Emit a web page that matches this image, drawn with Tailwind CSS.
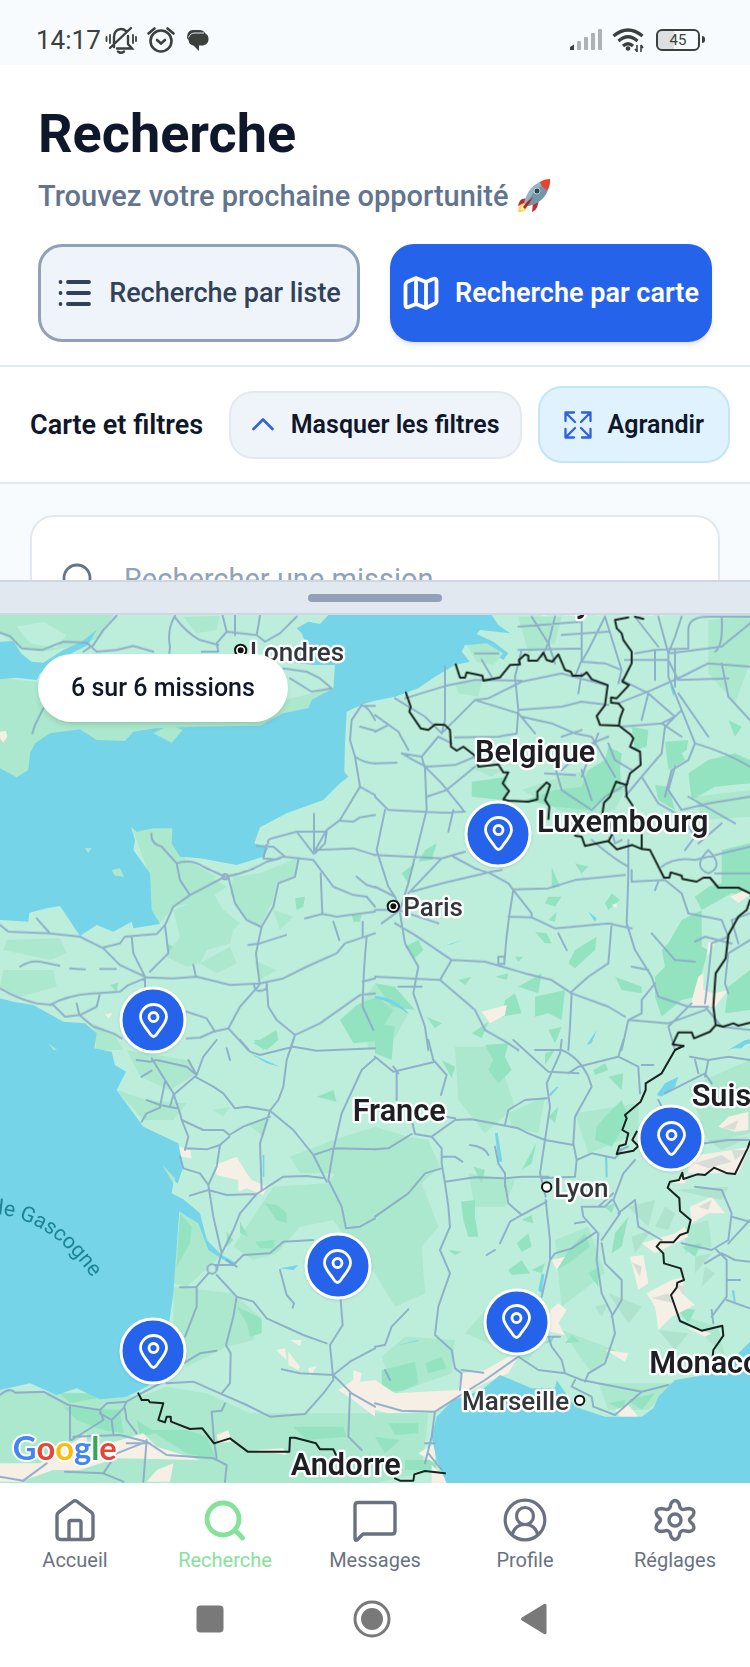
<!DOCTYPE html>
<html lang="fr">
<head>
<meta charset="utf-8">
<meta name="viewport" content="width=device-width, initial-scale=1">
<title>Recherche</title>
<script src="https://cdn.jsdelivr.net/npm/@tailwindcss/browser@4"></script>
</head>
<body class="flex min-h-screen flex-col bg-white font-['Roboto',sans-serif] text-slate-900">

<!-- Status bar -->
<div class="flex h-[65px] items-center justify-between bg-[#f7fbfe] pt-[14px] pr-[45px] pl-9 text-[#3b403e]">
  <div class="flex items-center">
    <span class="text-[26px] leading-8">14:17</span>
    <svg class="ml-1 h-8 w-8" viewBox="0 0 32 32" fill="none" stroke="currentColor" stroke-width="2.4" stroke-linecap="round">
      <path d="M9 23V13C9 8 12 5 16 5C18 5 19.500 5.600 21 7M23 12V20L27 24.500H12M5 24L26 4"/>
      <path d="M1.500 13V17M5 11V19M28 11V19M31 13V17" stroke-width="1.800"/>
      <path d="M13 27.500Q16 30 19 27.500" />
    </svg>
    <svg class="ml-2 h-8 w-8" viewBox="0 0 32 32" fill="none" stroke="currentColor" stroke-width="2.600" stroke-linecap="round">
      <circle cx="16" cy="17" r="10.500"/><path d="M3.500 9.500L9.500 4.500M22.500 4.500L28.500 9.500M12 16L16 19.500L20 16"/>
    </svg>
    <svg class="ml-1 h-8 w-8" viewBox="0 0 32 32" fill="currentColor">
      <path d="M12 6H18C21 6 23 7 24.500 9.500C27 11 27.500 13 27.500 15C27.500 19 25 21.500 20.500 21.500H18V27L12.500 21.500C9 21 8 19 7.500 16L6 14C6 9 8 6 12 6Z"/>
      <path d="M7.500 13.500Q9 9 14 9H23" stroke="#f7fbfe" stroke-width=".9" fill="none"/>
    </svg>
  </div>
  <div class="flex items-center gap-2">
    <svg class="h-6 w-9" viewBox="0 0 36 24" fill="#adb2b5">
      <path fill="#3b403e" d="M2 22V19L6 16.500V22Z"/><rect x="9" y="13" width="4" height="9" rx="1"/><rect x="16" y="9" width="4" height="13" rx="1"/><rect x="23" y="5" width="4" height="17" rx="1"/><rect x="30" y="1" width="4" height="21" rx="1"/>
    </svg>
    <svg class="h-6 w-8" viewBox="0 0 32 24" fill="none" stroke="currentColor" stroke-width="3.200">
      <path d="M1.500 8Q16 -4 30.500 8M6.500 13Q16 4.500 25.500 13M11 18Q16 13.500 21 18"/><circle cx="16" cy="20.500" r="1.600" fill="currentColor" stroke-width="1.500"/><path d="M25 17V24M29 17V24M23 21L25 23.500M29 17L31 20" stroke-width="1.600"/>
    </svg>
    <div class="ml-1 flex items-center gap-[2px]">
      <div class="flex h-[22px] w-[44px] items-center justify-center rounded-md border-2 border-current bg-linear-to-r from-[#dddfe0] from-40% to-transparent to-40% text-[15px] leading-4">45</div>
      <div class="h-[7px] w-[3px] rounded-r bg-current"></div>
    </div>
  </div>
</div>

<!-- Header -->
<header class="border-b-2 border-slate-200 px-[38px] pt-[37px] pb-[23px]">
  <h1 class="text-[54px] leading-16 font-bold">Recherche</h1>
  <p class="mt-3 flex items-center gap-2 text-[29px] leading-9 font-medium text-slate-500">Trouvez votre prochaine opportunité
    <svg class="h-9 w-9" viewBox="0 0 36 36" role="img" aria-label="Fusée">
      <path d="M12 20L6 21Q3 23 2 28L10 25Z" fill="#c22a34"/><path d="M17 25L16 34Q21 32 22 26L23 22Z" fill="#c22a34"/>
      <path d="M8 25Q2 27 2 34Q9 35 12 28Z" fill="#fbd95b"/><path d="M9 26Q4 29 5 32Q9 31 11 28Z" fill="#fff3b8"/>
      <path d="M10 27L8 25C11 13 17 6 27 3L33 9C30 19 23 26 12 28Z" fill="#93b4c1"/><path d="M10 27C16 15 22 9 30 6L33 9C30 19 23 26 12 28Z" fill="#7496a5"/>
      <path d="M24 4Q28 1 34 1Q35 7 31 12Q26 10 24 4Z" fill="#e8432e"/><path d="M7 29Q11 23 17 19Q14 25 9 31Z" fill="#b5252e"/>
      <circle cx="21" cy="13" r="3" fill="#2d4854" stroke="#b9cfd7"/>
    </svg>
  </p>
  <div class="mt-[30px] grid grid-cols-2 gap-[30px]">
    <button type="button" class="flex h-[98px] items-center justify-center rounded-3xl border-[3px] border-slate-400 bg-[#eff3fa] text-[27px] font-medium whitespace-nowrap text-slate-700">
      <svg class="mr-4 h-9 w-9 shrink-0" viewBox="0 0 36 36" fill="none" stroke="currentColor" stroke-width="3.800" stroke-linecap="round"><path d="M11 7H32M11 18H32M11 29H32M3.500 7V7.010M3.500 18V18.010M3.500 29V29.010"/></svg>
      Recherche par liste
    </button>
    <button type="button" class="flex h-[98px] items-center justify-center rounded-3xl bg-[#2563eb] text-[27px] font-semibold whitespace-nowrap text-white shadow-md">
      <svg class="mr-4 h-9 w-9 shrink-0" viewBox="0 0 36 36" fill="none" stroke="currentColor" stroke-width="3.800" stroke-linejoin="round"><path d="M13 3L4 7Q2.500 8 2.500 10V30Q2.500 33 5.500 32L13 29L23 33L31 29Q33.500 28 33.500 26V6Q33.500 3 30 4L23 7ZM13 3V29M23 7V33"/></svg>
      Recherche par carte
    </button>
  </div>
</header>

<!-- Map toolbar -->
<section class="flex items-center justify-between border-b-2 border-slate-200 py-[19px] pr-5 pl-[30px]">
  <h2 class="text-[27px] leading-8 font-semibold">Carte et filtres</h2>
  <div class="flex items-center gap-4">
    <button type="button" class="flex h-[68px] items-center rounded-3xl border-2 border-[#e4e8f1] bg-[#eff3fa] px-5 text-[25px] font-semibold whitespace-nowrap">
      <svg class="mr-4 h-6 w-6" viewBox="0 0 24 24" fill="none" stroke="#2f62dd" stroke-width="2.600" stroke-linecap="round" stroke-linejoin="round"><path d="M2.500 16L12 6.500L21.500 16"/></svg>
      Masquer les filtres
    </button>
    <button type="button" class="flex h-[77px] items-center rounded-3xl border-2 border-[#c3e6f5] bg-[#e0f2fe] px-6 text-[25px] font-semibold whitespace-nowrap">
      <svg class="mr-4 h-7 w-7" viewBox="0 0 28 28" fill="none" stroke="#2f62dd" stroke-width="2.300" stroke-linecap="round" stroke-linejoin="round"><path d="M1.500 10V1.500H10M1.500 1.500L11 11M18 1.500H26.500V10M26.500 1.500L17 11M1.500 18V26.500H10M1.500 26.500L11 17M18 26.500H26.500V18M26.500 26.500L17 17"/></svg>
      Agrandir
    </button>
  </div>
</section>

<section class="h-24 shrink-0 overflow-hidden bg-[#f7fbfe] px-[30px] pt-[31px]">
  <div class="rounded-3xl border-2 border-slate-200 bg-white px-[30px] py-7">
    <label class="flex h-[70px] items-center">
      <svg class="mr-7 h-[34px] w-[34px] shrink-0" viewBox="0 0 34 34" fill="none" stroke="#64748b" stroke-width="2.800" stroke-linecap="round"><circle cx="15" cy="15" r="13"/><path d="M25 25L32 32"/></svg>
      <input type="search" aria-label="Rechercher une mission" placeholder="Rechercher une mission..." class="w-full text-[29px] outline-none placeholder:text-slate-400">
    </label>
  </div>
</section>
<button type="button" aria-label="Redimensionner la carte" class="flex h-[35px] shrink-0 items-center justify-center border-y-2 border-[#cfd7e3] bg-slate-200">
  <span class="h-2 w-[134px] rounded-full bg-[#94a0b8]"></span>
</button>

<!-- Map -->
<main class="relative min-h-[868px] flex-1 overflow-hidden bg-[#bdeedb]">
  <svg class="absolute inset-0 h-full w-full" viewBox="0 0 2250 2604" preserveAspectRatio="xMidYMid slice">
    <rect width="2250" height="2604" fill="#bdeedb"/>
    <!-- light woodland -->
    <g fill="#abe8cd">
      <path transform="translate(0 -15)" d="M0 15H340L300 80 250 105 130 125 60 115 0 68ZM0 205L110 215 300 290 600 330 1000 235 860 340 400 400 290 400 90 500 0 500ZM550 20L660 18 650 60 590 70ZM395 650L520 650 560 760 680 830 620 870 520 890 480 940 440 930 450 800ZM560 750L650 800 570 850ZM700 800L780 790 900 740 890 790 830 820 820 870 780 950 730 920 690 850ZM520 900L640 850 670 900 720 940 700 960 690 1000 620 1020 600 1060 560 1070 500 1040 540 980ZM600 1060L690 1010 710 1060 650 1090ZM20 990L180 985 200 1030 150 1050 10 1020ZM10 1080L160 1080 170 1130 60 1160 0 1130ZM820 900L880 920 840 960ZM760 1050L830 1080 780 1110ZM280 1240L340 1270 370 1320 290 1320Z"/>
      <path transform="translate(1125 -15)" d="M430 20L560 20 540 100 460 130ZM240 220L320 215 310 260 250 250ZM1000 30L1125 20V160L1080 280 1000 190ZM960 560L1125 540V620L980 630ZM-40 1180L0 1120 60 1140 100 1210 40 1320 -20 1320ZM280 470L380 480 350 500ZM440 540L560 500 640 480 750 540 720 600 620 620 550 600Z"/>
      <path fill="#bdeedb" d="M50 35L130 20 200 60 170 100 90 85Z"/>
      <path transform="translate(0 1275)" d="M380 30L560 60 590 100 510 150 420 110ZM350 150L440 180 560 190 520 240 430 240ZM540 520L600 540 640 640 660 650 560 740 520 730ZM520 740L700 760 780 830 760 900 680 920 560 980 520 900ZM820 440L980 430 1125 280V700L1070 640 1000 540 900 560 830 640 760 660 700 620ZM870 350L1000 300 1125 260V460L1050 480 1000 400 900 400ZM0 1050L250 1060 420 1070 500 1040 620 1060 750 1120 1125 1120V1330H0ZM640 210L690 200 670 230ZM740 250L810 230 790 290Z"/>
      <path transform="translate(1125 1275)" d="M0 260L100 290 160 300 195 380 140 430 190 560 140 620 150 760 60 800 0 700ZM240 20L360 20 420 200 330 280 250 180ZM280 400L420 420 390 500 300 500ZM400 220L510 170 490 280 410 260ZM540 600L640 560 690 700 560 800ZM600 220L790 190 790 280 640 340ZM20 950L90 890 240 900 230 1000 60 1060ZM270 880L340 800 520 880 460 960ZM560 870L720 930 650 1000ZM670 1030L900 1030 820 1110 700 1110ZM940 140L1125 60V280L1000 310ZM0 1120L160 1120 140 1300 0 1330ZM1050 950L930 830 1030 860ZM930 560L1000 540 1010 620 930 640Z"/>
    </g>
    <!-- dense woodland -->
    <g fill="#94e3c0">
      <path transform="translate(0 -15)" d="M885 865L915 860 910 890 890 900ZM1055 915L1085 915 1080 935 1060 935ZM330 1125L355 1118 350 1145ZM760 1300L830 1260 835 1290 800 1320ZM1020 1230L1070 1185 1130 1160 1180 1200 1150 1250 1165 1290 1060 1300ZM500 1000L520 1010 505 1030Z"/>
      <path transform="translate(1125 -15)" d="M290 515L400 500 390 530 400 550 380 570 290 560ZM700 410L740 430 735 480 740 540 690 560 640 600 540 590 450 570 540 540 620 530 640 480 690 450ZM870 395L940 390 935 420 920 430 930 450 880 480ZM940 490L1000 450 1080 430 1125 450V520L1020 530 950 570ZM770 350L820 360 815 410 780 420ZM840 525L880 530 900 600 850 570ZM1040 720L1125 700V860L1070 850 980 900 960 860 1000 830 1040 820ZM880 1000L920 930 980 900 980 960 980 1010 1000 1020 980 1090 960 1160 920 1170 860 1220 840 1160 840 1100 870 1070 860 1020ZM710 850L735 870 700 900 690 880ZM580 1060L600 1020 665 980 660 1020 600 1075ZM520 860L560 860 540 890 510 880ZM530 770L555 830 530 835ZM600 760L640 770 620 790 650 840ZM150 720L185 700 170 750 130 755ZM80 790L120 760 100 820ZM90 1010L130 990 145 1020 120 1045ZM480 965L515 970 530 1000 510 1000ZM0 1120L60 1130 120 1200 50 1190ZM250 1110L290 1100 270 1125ZM360 1100L400 1090 395 1110ZM390 1170L420 1150 440 1210 380 1220ZM430 1130L500 1090 490 1150ZM480 1160L570 1140 560 1230 520 1210 480 1220ZM290 1270L340 1235 320 1285ZM420 1040L445 1040 430 1055ZM720 1100L800 1130 800 1150 740 1140ZM1060 1130L1125 1080V1200L1050 1210ZM0 1240L60 1250 50 1320H0ZM520 1260L560 1250 540 1300ZM155 1220L200 1240 180 1255ZM1060 330L1100 350 1080 380ZM520 930L545 905 540 935Z"/>
      <path transform="translate(0 1275)" d="M795 490L830 495 860 520 860 550 830 540ZM765 605L825 600 820 625 780 625ZM710 800L785 835 785 880 750 890 740 850ZM950 170L1000 150 1010 185ZM720 545L745 590 720 580ZM540 520L575 560 570 610 530 680ZM180 1060L270 1060 290 1075 210 1090ZM190 1100L360 1110 370 1180 310 1170 230 1140ZM450 1170L560 1170 620 1190 650 1260 560 1240ZM880 1160L1030 1160 1040 1190 920 1200ZM760 0L830 0 790 30ZM410 1140L470 1180 420 1190ZM680 575L700 600 680 620Z"/>
      <path transform="translate(1125 1275)" d="M0 0L55 0 50 60 0 40ZM200 60L240 80 230 115ZM330 15L400 10 390 50 410 90 370 130 340 90 355 60ZM655 90L690 70 700 90 660 105ZM700 110L745 100 740 150ZM510 40L540 30 510 75ZM665 260L690 230 740 180 760 230 740 270 710 320 660 300ZM440 390L485 305 470 370ZM295 380L330 390 320 430ZM258 485L300 480 300 530 310 590 280 590 265 540ZM440 540L470 525 475 550ZM425 610L460 580 470 620 440 635ZM400 690L440 660 465 700 410 705ZM470 690L510 670 500 700ZM545 690L580 630 630 580 645 620 580 670ZM640 700L670 680 670 740ZM710 640L720 580 760 530 740 620ZM570 910L590 885 615 905ZM20 990L120 965 130 1030 90 1050 20 1060ZM150 970L200 950 215 985 160 1000ZM40 1150L130 1150 130 1180 60 1185ZM0 1190L75 1200 30 1240ZM700 1090L750 1080 745 1110ZM760 1080L840 1060 800 1110ZM90 1260L190 1260 180 1290 90 1290ZM920 620L980 610 960 650ZM520 230L550 200 540 250ZM1040 150L1090 140 1080 180ZM220 630L260 635 240 645ZM900 800L960 810 940 850ZM690 500L720 490 710 520Z"/>
    </g>
    <!-- sand, snow and built-up areas -->
    <g fill="#f5efe5">
      <path transform="translate(0 -15)" d="M0 365L18 362 22 380 10 398 0 385ZM315 1212L338 1210 325 1225Z"/>
      <path transform="translate(1125 -15)" d="M1065 860L1110 840 1125 855 1090 878ZM320 1205L395 1185 390 1215 345 1240ZM970 1100L985 1090 985 1140 1015 1150 1060 1140 1020 1190 945 1190ZM710 885L725 880 725 895ZM1000 995L1020 1000 995 1040Z"/>
      <path transform="translate(0 1275)" d="M645 375L710 350 740 400 755 420 800 440 790 465 740 445 715 455 715 420 650 405ZM530 318L570 330 575 355 545 350ZM828 930L855 925 860 960ZM865 935L900 980 895 990 865 975ZM870 900L905 900 900 918ZM925 985L950 978 930 1010ZM1015 1050L1060 1020 1060 990 1085 1000 1080 1025 1125 1020V1130L1060 1080ZM650 1185L685 1170 695 1205 655 1210ZM0 1270L120 1270 240 1195 260 1180 260 1230 430 1180 470 1220 600 1260 350 1255 240 1290 160 1290 60 1325H0ZM470 1290L520 1270 510 1325H440ZM760 1230L850 1225 860 1245Z"/>
      <path transform="translate(1125 1275)" d="M0 1020L60 1060 250 1050 260 1000 330 990 400 950 430 950 400 1000 330 1030 240 1080 180 1115 40 1120 0 1110ZM530 660L570 650 545 690ZM525 810L550 790 575 810 550 850 570 885 525 875ZM690 930L760 940 750 965ZM720 1110L760 1095 790 1130 740 1135ZM130 1240L180 1210 180 1270ZM1030 260L1060 230 1120 215V270L1080 275ZM940 350L1070 330 1125 320 1090 400 940 400ZM880 430L940 400 930 430ZM945 500L1010 470 1050 520 1000 520 950 550ZM800 610L900 580 930 560 940 590 840 640ZM765 650L805 645 820 730 790 750ZM815 760L890 720 930 710 920 760 960 795 890 830 850 870 840 800ZM930 860L1010 880 990 890ZM170 1275L230 1330 170 1330Z"/>
    </g>
    <g fill="#d9ddd8">
      <path transform="translate(1125 1275)" d="M1040 265L1090 240 1080 270ZM960 370L1040 345 1070 365 1000 385ZM770 665L800 680 795 710ZM830 775L880 760 900 790ZM970 500L1010 480 1000 510ZM900 730L930 740 925 765ZM1070 330L1120 330 1080 360Z"/>
    </g>
    <g fill="#a7dcc5" opacity=".6">
      <path transform="translate(1125 1275)" d="M760 500L840 480 820 560ZM870 500L900 520 880 570 840 560ZM960 650L1010 640 960 700ZM700 760L800 800 760 850ZM850 870L940 880 900 930ZM1000 300L1125 290 1040 330ZM900 450L1060 440 1040 480ZM770 590L830 570 780 640ZM660 800L700 790 680 830ZM990 680L1020 700 980 740Z"/>
    </g>
    <!-- seas, lakes and rivers -->
    <g fill="#76d4e9">
      <path transform="translate(0 -15)" d="M0 95L40 93 65 132 95 155 130 158 190 120 245 95 290 60 265 105 215 130 120 190 110 210 50 203 0 208Z"/>
      <path transform="translate(0 -15)" d="M0 475L50 502 85 480 90 430 105 400 150 370 240 358 290 390 375 393 400 365 465 355 595 350 780 347 850 310 925 294 935 270 1000 235 1005 165 940 165 860 155 915 95 905 70 890 55 925 35 960 42 985 15 1475 15 1495 45 1530 70 1440 60 1430 72 1480 95 1525 130 1510 150 1450 110 1395 105 1385 125 1410 155 1365 165 1305 200 1255 235 1185 260 1125 272 1090 282 1040 305 1035 400 1033 485 1045 500 1020 520 970 570 860 610 780 652 763 700 805 715 790 740 710 765 600 745 540 740 515 700 517 655 460 655 410 665 393 650 405 690 400 720 450 790 455 900 480 942 400 955 395 935 340 965 290 945 240 978 180 888 140 895 88 908 85 935 0 930Z"/>
      <path transform="translate(0 1275)" d="M0 -125L40 -115 100 -105 190 -55 255 -50 290 -20 283 25 335 35 345 75 378 95 350 150 430 260 535 310 550 380 532 432 488 375 520 430 515 460 550 478 600 520 620 600 665 645 710 670 690 672 625 630 595 550 538 515 525 690 520 760 510 830 480 1000 440 1040 380 1070 300 1078 230 1045 170 1065 90 1030 0 1050Z"/>
      <path transform="translate(1125 1275)" d="M1125 905L1080 950 1020 1000 900 1020 850 1070 835 1105 800 1130 690 1130 600 1100 545 1020 540 1045 470 1045 375 1005 320 1050 235 1080 185 1130 170 1190 185 1260 215 1330H1125Z"/>
      <path transform="translate(1125 1275)" d="M845 165L870 130 910 110 900 140 860 170ZM1060 30L1110 0 1125 0V10ZM520 165L545 140 550 142 528 168ZM360 280L368 278 382 365 370 365ZM490 750L500 700 508 705 500 760ZM510 910L540 885 530 905ZM690 350L697 350 698 412 692 412ZM60 917L130 900 130 903ZM1070 750L1078 752 1082 785 1076 785Z"/>
      <path transform="translate(0 1275)" d="M840 685L895 675 880 690ZM788 345H793V410H788ZM750 40L840 80 800 70Z"/>
      <path transform="translate(1125 -15)" d="M885 225L900 240 895 260ZM640 905L665 925 660 935ZM215 1005L262 990 230 1003ZM0 1158Q60 1160 105 1215Q50 1175 0 1165ZM635 1305L665 1260 650 1300ZM1075 1315L1125 1285 1100 1315Z"/>
    </g>
    <g fill="#abe8cd">
      <path d="M460 355L510 330 548 345 515 383ZM255 700L275 698 265 715ZM335 765L360 760 372 785 345 782ZM145 1285L172 1305 160 1305ZM488 1650L525 1690 520 1705Z"/>
      <path d="M1400 90L1460 85 1510 115 1480 150 1430 140Z"/>
    </g>
    <!-- roads -->
    <g fill="none" stroke="#8aaac8" stroke-width="6" stroke-linejoin="round" stroke-linecap="round" opacity=".9">
      <path transform="translate(0 -15)" d="M0 68L30 78 65 115 125 120 190 95 260 98 290 125 350 120 400 108 460 125M350 17L310 60 280 105 250 125M525 17Q500 60 510 110L508 130M525 22Q560 70 600 90L655 105M668 17L680 65 650 100 655 125H605M680 65L770 75 795 95M705 17V75M780 17L770 75M795 95L840 70 890 20M850 175L920 185 960 205 995 235 935 245 870 205M130 295L105 345 97 370M1125 330Q1105 290 1085 285L1055 330 1050 390 1065 440 1080 530 1020 630 980 660 940 730M1085 288H1125M1080 350L1125 362M1065 440Q1095 460 1125 460M1080 530L1125 555M1020 632L1060 635 1080 622 1125 615M805 700Q800 690 815 685L890 665 980 665 975 700 945 730M890 665L940 730M942 612V725M800 705L790 745 825 748 850 740 940 750M770 708L820 710 855 740M950 720L1060 715 1125 735M940 750L1000 830 1060 855 1100 860 1125 890M962 790L967 912 915 925M967 912L1010 920 1125 905M1070 800L1100 825 1125 832M1000 935L1018 990M1088 935V980M455 670Q450 700 485 710L530 760 540 810 570 855M530 760Q570 745 610 770L675 800M675 800L570 855 520 890 495 945M675 800Q740 790 800 755L840 745M685 800L705 880 740 930 782 950M895 750L885 800 835 820 820 890 785 950 768 1030 778 1115M745 1005L780 1000 858 975M0 945L25 965 150 970 240 980 310 1015 360 1065 435 1100M310 1012L360 1000 375 980 470 972 495 945 505 1030 450 1085M395 980L400 1030 435 1100V1135M440 1102L520 1105 590 1100 690 1125 780 1120 850 1105 920 1070 1010 1030 1035 1000 1125 970M580 1065L588 1100M60 1070Q90 1050 120 1055L178 1067M210 1075L255 1078M300 1077L348 1077M110 925L148 968M0 1135Q60 1170 110 1180L160 1185 195 1220 240 1215 290 1190 300 1150M150 1185Q200 1155 280 1150L360 1145 385 1125 435 1105M230 1180L238 1215 280 1250 340 1270 365 1285M1100 980Q1090 1080 1088 1190L1120 1260M800 1120L805 1190 830 1230 885 1275 870 1320M778 1125L720 1190 685 1255 640 1265 600 1283 560 1285M560 1205L620 1225 645 1265M685 1255L745 1320M885 1275L960 1240 1080 1155 1125 1150M762 1125Q765 1145 785 1142T800 1120M1088 1115L1125 1105"/>
      <path transform="translate(1125 -15)" d="M0 315L70 365 100 420M0 365L40 345M80 430L140 440 190 380 230 400M60 265L150 320 200 370 300 270 340 265 440 215 560 190 690 225M90 265L210 228 300 210 440 212M210 170V330L200 370M440 120L420 200 430 300 425 370 370 380 240 382M430 300L560 290 620 275 700 285M440 320L530 340 600 370 650 380M430 310L480 370M300 270L430 310M140 440L150 475 155 600 130 700 100 820 75 900M80 430Q130 460 155 470L240 465 300 440M155 560L215 540 300 470M155 475L200 520 265 600M220 665L235 600M0 560L40 600 200 608 270 605M0 460L65 458M30 600L5 720 40 830 60 860M0 735L100 740 200 745 270 725M200 745L100 850M110 845L200 820 350 785 380 780M235 740L300 775 345 790 400 820 415 840Q395 950 388 1060M415 838L520 835 600 810 750 795M415 840L470 910V922M400 920L470 922 540 955 700 940 770 955M60 940L120 975 230 1050 330 1055 400 1075 450 1090 530 1110 590 1150 700 1190 750 1220M230 1050L195 1110 300 1200 330 1260 400 1300 430 1320M195 1110L0 1100M590 1150L585 1250 580 1320M590 1145L640 1100 700 1060 710 940M75 910L90 1000 130 1070 115 1150 150 1250 160 1320M70 1130H140M0 830L60 860 75 900 20 940M0 900H70L190 940M370 1040H388V1062H370ZM470 20L520 100 500 140M540 20L520 100 540 160M620 20V150L600 200M430 50L620 35M560 75L700 65M690 20L640 120 620 155 690 160 740 180M690 20L740 180 730 220M430 120L620 115M610 250L620 190M880 130L850 20M880 130L900 80 920 20M880 130L1040 110 1125 40M780 130L840 120 940 115V60Q940 20 1000 20H1125M1040 20Q1045 110 1020 125M840 120V210M750 150L880 150 910 210 1060 205M900 120V230M780 20L850 110M880 130L880 200 920 300 960 400 940 450M920 300L870 350 860 430 800 500 750 560M960 400Q1060 430 1125 470M740 210L820 250 900 320 860 340M730 280L830 240 920 200 1000 160 1125 170M820 250L800 330M910 250L1000 380M1040 160L1060 260 1125 330M740 350L860 340 920 380M700 380L650 400 560 480M650 380L720 500M670 370L620 500M700 400L720 450 770 480M540 470L560 540 650 600 690 560 760 520M620 480L650 570M510 490L600 495M560 380L620 360M800 500L850 580 920 620 960 680 930 720M900 470L880 540 920 600 1000 580 1125 560M940 450L890 480 870 560M940 560L1080 640M760 690V800L755 940M770 780V815L870 810 920 850 940 910 1040 930M650 690Q720 750 760 770M860 770Q900 740 960 750L1125 710M1000 720Q1050 770 1000 790 950 770 1000 720M1020 790L1125 790M1040 930L1060 980 1010 1000 1000 1100 990 1180M1125 910L1070 930 1090 1000M960 995L990 980 1070 1000M1125 990L1060 1030 1050 1120 1060 1150M755 940L780 1020 830 1100 850 1160 940 1190 1000 1190M830 970L900 1050 960 1055M770 1070L820 1080M840 1120L800 1170 800 1210 760 1230 740 1320M760 1230L880 1240 990 1200M950 1180L880 1250 900 1320M990 1190L1040 1250 1125 1260M550 970L575 1020M840 840L850 815M970 700L1040 640M700 620L720 700 740 690M300 130H370M320 150L350 200"/>
      <path transform="translate(0 1275)" d="M410 60L450 65 470 60 560 80 590 105M425 110L455 92M455 55L495 120 520 160 540 220 545 240 565 290 555 330M565 60L590 105M650 0L610 50 590 105 520 165 510 200M585 110L640 140 670 160 705 205 740 200 810 212M680 25L690 60M720 0L750 35 780 45 880 20 950 32 1125 25M880 0L860 60 850 140 835 180 810 212M495 125L480 200M440 180L480 195 530 205M425 245L440 220 480 203M545 240L610 270 670 270 688 285 730 260 810 230M810 212L780 310 785 450M555 325L620 328 660 315 688 290M660 315L650 380 625 435M540 350L550 385 600 400 625 435M570 467L625 450 680 465 770 462 720 520 700 570 665 640M625 435L640 530 665 640 650 690M770 462L850 410 920 408 975 415M810 212L880 270 940 345 980 425M940 345L1000 325 1125 328M1125 55L1085 90 1025 220 1000 330 985 420 1025 500 1038 565 1080 560 1125 535M645 675L700 675 730 645 810 640 850 605 940 600M680 660L710 680M840 690L860 765 882 790 878 803M625 700L590 740 590 800 555 890M540 742H590M650 705L710 770 760 785 800 835 910 885 980 910M710 770L700 830 678 915 692 940 690 1030 665 1060M550 970L600 940 650 932M500 1030L580 1025 660 1060 740 1095 810 1130 915 1122 970 1060 1000 1020 990 915 1028 855 1022 780M845 988L900 1000 1000 1005 1050 965 1125 925M1000 1005L1055 1060 1125 1100M1050 1060L1045 1190 1085 1230M0 1065Q30 1040 45 1058L130 1055 205 1095 300 1110 320 1090 380 1085 415 1065 490 1025M210 1095V1200M300 1110L310 1140 215 1200M300 1120L335 1140 340 1180M380 1085L370 1105 335 1140M375 1105L380 1140 410 1180M440 1200L430 1325M440 1205L500 1245 640 1255 680 1275 675 1325M440 1205L350 1240 310 1300 195 1295M0 1310L70 1322 140 1270M310 1300L370 1325M220 1190L360 1185 440 1205M675 1090L665 1112 635 1115 642 1200 650 1255M380 1210H450"/>
      <circle cx="636" cy="1962" r="14"/><circle cx="676" cy="785" r="8"/>
      <path transform="translate(1125 1275)" d="M160 0L175 60 215 105 198 165M0 50L55 95 180 65M65 95V180M55 80L70 100M110 240L120 282 170 290 200 325 200 370 210 430 220 500 225 560 195 630 225 700 190 800 180 885 230 930 240 985M0 328L40 325 110 282M170 290L240 240 290 238 380 255 430 265 460 280 510 300M200 350L240 350 262 365M200 385L150 400 100 460 0 530M210 425L300 412 390 415 440 410 520 410M390 255L400 210 450 180 515 175M390 440L390 400 370 370 360 320M285 315Q330 320 340 345M390 430L400 490 440 525M515 485L440 525 405 545 375 610M360 630L335 645M240 235L210 230M415 0L520 95 610 100M480 30L560 30M560 0L555 40 515 130 525 200 510 300 495 400 512 470M560 30Q610 50 640 110L650 140 600 230 595 310 605 360 600 410 500 415M580 100L610 80 730 50 790 80 795 160M745 0L730 50M510 300L595 315M605 360L650 340 720 355 740 330M512 480L525 600 525 660 500 770M525 660L540 640 590 625 665 575M620 500L625 530 670 580 665 660 680 760 710 820 720 880 690 970 640 1000M680 610L690 670 740 720 740 780 710 830M600 550L630 545M620 500H690L710 480M780 360L745 400 715 480 735 520 680 600M715 460L670 500M730 520L780 480 790 560 860 600M945 50L1000 60 990 110M870 160L990 100 1010 130M850 180L870 220M970 100L960 60M1000 60L1060 50 1125 60M800 75H835M0 920L30 915 50 860 100 808M260 990L325 998M240 985L260 1000 255 1050M430 950L330 1020 250 1070 180 1115 170 1190 150 1270M430 950L490 990 570 1000 620 1020 800 1055 880 1035M520 890L530 920 560 960 570 1000M0 1090L80 1112 180 1115M600 1020L590 1040 650 1070 655 1100 720 1125 800 1055M640 1000L630 1025M990 310L1060 300 1125 300M960 440L1040 450 1070 520 1060 600 1010 630 920 610M1070 530L1125 545M1125 540L1060 610M1020 625L1055 660V770L1010 830M990 670L1040 640 1080 660 1125 665M1055 720L1095 720M1055 780L1125 805M1010 810L1015 850M150 1210H180M30 990L45 1020M160 1240L200 1290M735 330L760 320M520 890H555"/>
    </g>
    <!-- national borders -->
    <g fill="none" stroke="#18221f" stroke-width="6" stroke-linejoin="round" stroke-linecap="round">
      <path transform="translate(1125 -15)" d="M92 247L107 290 103 305 137 355 160 360 180 343 210 345 225 360 228 410 245 422 265 410 300 437 310 470 370 463 385 487 400 487 383 520 402 543 385 568 400 572 460 575 487 568 487 545 515 517 525 525 510 570 523 590 520 627M242 163L255 203 270 203 275 187 322 197 325 212 375 202 405 165 435 163 432 150 450 133 460 137 460 152 487 152 505 128 515 150 532 155 550 133 570 180 587 185 593 197 622 197 635 187 650 208 698 225 690 285 665 318 675 345 732 347 768 375 775 385 765 410 795 425 797 465 765 490 753 530 755 560 773 587M755 525L723 515 705 560 687 578 682 612M600 677L620 680 630 708 700 693 725 718 772 705 800 717 825 720 867 803 883 803 887 787 920 797 922 807 965 815 985 803 1005 803 1030 833 1090 833 1125 850M800 717V675M700 695L710 675M732 345L735 325 745 298 730 280 708 278 708 262 725 265 762 225 742 215 770 160 770 125 745 90 740 70 725 55 720 30 760 22M780 20L805 27M1125 870L1115 900 1090 920 1060 975 1052 1045 1022 1090 1015 1190 1022 1245 1045 1250 1075 1240 1090 1247 1125 1238M1022 1245L1005 1265 957 1285 950 1267 910 1267 893 1303 925 1308"/>
      <path transform="translate(1125 1275)" d="M925 18L900 30 860 100 812 130 812 150 797 185 750 225 755 235 742 270 760 280 752 313 733 318 725 342 775 332 790 318 772 300 785 275M1125 305L1118 325 1080 402 1057 400 1017 383 990 405 967 403 925 417 922 398 912 420 885 425 878 443 913 475 915 513 947 540 938 577 915 585 895 607 855 607 845 620 865 640 867 670 917 685 927 720 907 728 905 743 888 765 915 843 980 872 1042 857 1045 887 1015 930 1013 950M60 1315L75 1322 115 1322 118 1303 150 1293 210 1300"/>
      <path transform="translate(0 1275)" d="M415 1060L425 1080 445 1080 450 1087 490 1090 475 1140 495 1147 500 1130 512 1130 513 1145 570 1167 607 1165 642 1210 690 1195 743 1235 868 1235 870 1193 885 1193 948 1210 960 1228 1000 1228 1008 1245"/>
    </g>
    <!-- city markers -->
    <g fill="#fff" stroke="#111" stroke-width="6">
      <circle cx="722" cy="106" r="17"/><circle cx="1180" cy="874" r="17"/><circle cx="1640" cy="1716" r="14"/><circle cx="1739" cy="2356" r="14"/>
      <circle cx="722" cy="106" r="6" fill="#111"/><circle cx="1180" cy="874" r="6" fill="#111"/>
    </g>
    <!-- place names -->
    <g stroke="#fff" stroke-width="14" stroke-linejoin="round" paint-order="stroke" fill="#33363a" font-size="78" font-weight="500">
      <text x="750" y="138">Londres</text><text x="1210" y="904">Paris</text><text x="1663" y="1745">Lyon</text><text x="1386" y="2386">Marseille</text>
    </g>
    <g stroke="#fff" stroke-width="14" stroke-linejoin="round" paint-order="stroke" fill="#1d1f22" font-size="92" font-weight="600">
      <text x="1425" y="440">Belgique</text><text x="1611" y="650">Luxembourg</text><text x="1058" y="1519">France</text><text x="2075" y="1473">Suisse</text><text x="1948" y="2275">Monaco</text><text x="872" y="2580">Andorre</text><text x="1620" y="-6">Pays-Bas</text>
    </g>
    <path id="gascogne" d="M-28 1796Q150 1805 280 1995" fill="none"/>
    <text font-size="64" fill="#1d8496"><textPath href="#gascogne">de Gascogne</textPath></text>
    <text x="38" y="2536" font-family="Lato, sans-serif" font-size="98" font-weight="700" stroke="#fff" stroke-width="12" stroke-linejoin="round" paint-order="stroke"><tspan fill="#4285f4">G</tspan><tspan fill="#ea4335">o</tspan><tspan fill="#fbbc05">o</tspan><tspan fill="#4285f4">g</tspan><tspan fill="#34a853">l</tspan><tspan fill="#ea4335">e</tspan></text>
  </svg>

  <p class="absolute top-[39px] left-[38px] flex h-[68px] items-center rounded-full bg-white px-[33px] text-[25px] font-medium shadow-md">6 sur 6 missions</p>

  <svg class="hidden"><symbol id="pin" viewBox="0 0 30 36" fill="none" stroke="#fff" stroke-width="2.800" stroke-linejoin="round"><path d="M15 34Q17 34 20 29C24 24 28 19.500 28 14.500A13 12.500 0 0 0 2 14.500C2 19.500 6 24 10 29Q13 34 15 34Z"/><circle cx="15" cy="14.500" r="4.500"/></symbol></svg>
  <button type="button" aria-label="Mission, Ardennes" class="absolute top-[25.2%] left-[66.4%] flex size-[67px] -translate-1/2 items-center justify-center rounded-full border-[3px] border-white bg-[#2563eb] shadow"><svg class="h-9 w-[30px]"><use href="#pin"/></svg></button>
  <button type="button" aria-label="Mission, Bretagne" class="absolute top-[46.7%] left-[20.4%] flex size-[67px] -translate-1/2 items-center justify-center rounded-full border-[3px] border-white bg-[#2563eb] shadow"><svg class="h-9 w-[30px]"><use href="#pin"/></svg></button>
  <button type="button" aria-label="Mission, Alpes" class="absolute top-[60.3%] left-[89.5%] flex size-[67px] -translate-1/2 items-center justify-center rounded-full border-[3px] border-white bg-[#2563eb] shadow"><svg class="h-9 w-[30px]"><use href="#pin"/></svg></button>
  <button type="button" aria-label="Mission, Dordogne" class="absolute top-[75%] left-[45%] flex size-[67px] -translate-1/2 items-center justify-center rounded-full border-[3px] border-white bg-[#2563eb] shadow"><svg class="h-9 w-[30px]"><use href="#pin"/></svg></button>
  <button type="button" aria-label="Mission, Gard" class="absolute top-[81.4%] left-[68.9%] flex size-[67px] -translate-1/2 items-center justify-center rounded-full border-[3px] border-white bg-[#2563eb] shadow"><svg class="h-9 w-[30px]"><use href="#pin"/></svg></button>
  <button type="button" aria-label="Mission, Pays basque" class="absolute top-[84.8%] left-[20.4%] flex size-[67px] -translate-1/2 items-center justify-center rounded-full border-[3px] border-white bg-[#2563eb] shadow"><svg class="h-9 w-[30px]"><use href="#pin"/></svg></button>
</main>

<!-- Tab bar -->
<nav class="grid h-[87px] grid-cols-5 pt-[15px] text-[20px] leading-6 text-gray-500">
  <a href="#" class="flex flex-col items-center gap-[6px]">
    <svg class="h-11 w-11" viewBox="0 0 44 44" fill="none" stroke="currentColor" stroke-width="3.400" stroke-linejoin="round"><path d="M4 17.500Q4 15.500 5.500 14.300L20 3.500Q22 2 24 3.500L38.500 14.300Q40 15.500 40 17.500V38Q40 41.500 36.500 41.500H7.500Q4 41.500 4 38ZM16 41V24.500Q16 22.500 18 22.500H26Q28 22.500 28 24.500V41"/></svg>
    Accueil</a>
  <a href="#" aria-current="page" class="flex flex-col items-center gap-[6px] text-[#86e29b]">
    <svg class="h-11 w-11" viewBox="0 0 44 44" fill="none" stroke="currentColor" stroke-width="4.800" stroke-linecap="round"><circle cx="20" cy="21" r="16"/><path d="M32 32L39.500 40"/></svg>
    Recherche</a>
  <a href="#" class="flex flex-col items-center gap-[6px]">
    <svg class="h-11 w-11" viewBox="0 0 44 44" fill="none" stroke="currentColor" stroke-width="3.400" stroke-linejoin="round"><path d="M5 4.500H39Q42 4.500 42 7.500V33Q42 36 39 36H10L4 42Q2 43 2 40V7.500Q2 4.500 5 4.500Z"/></svg>
    Messages</a>
  <a href="#" class="flex flex-col items-center gap-[6px]">
    <svg class="h-11 w-11" viewBox="0 0 44 44" fill="none" stroke="currentColor" stroke-width="3.200"><circle cx="22" cy="22" r="19.800"/><circle cx="22" cy="18" r="8.500"/><path d="M9 37Q12 26.500 22 26.500T35 37"/></svg>
    Profile</a>
  <a href="#" class="flex flex-col items-center gap-[6px]">
    <svg class="h-11 w-11" viewBox="0 0 44 44" fill="none" stroke="currentColor" stroke-width="3.400" stroke-linejoin="round"><path d="M18 5.500Q22 -.5 26 5.500L27 9.500Q29 12.500 32.500 11L36 10.500Q43 11.500 40 17.500L37.500 20Q35.500 22 37.500 24L40 26.500Q43 32.500 36 33.500L32.500 33Q29 31.500 27 34.500L26 38.500Q22 44.500 18 38.500L17 34.500Q15 31.500 11.500 33L8 33.500Q1 32.500 4 26.500L6.500 24Q8.500 22 6.500 20L4 17.500Q1 11.500 8 10.500L11.500 11Q15 12.500 17 9.500Z"/><circle cx="22" cy="22" r="6"/></svg>
    Réglages</a>
</nav>

<!-- System navigation -->
<div class="flex h-[97px] items-center justify-center gap-[122px] pr-[6px] text-[#797979]">
  <button type="button" aria-label="Applications récentes" class="size-10"><svg viewBox="0 0 40 40" fill="currentColor"><rect x="6.500" y="6.500" width="27" height="27" rx="4"/></svg></button>
  <button type="button" aria-label="Écran d'accueil" class="size-10"><svg viewBox="0 0 40 40" fill="currentColor"><circle cx="20" cy="20" r="17" fill="none" stroke="currentColor" stroke-width="3"/><circle cx="20" cy="20" r="11"/></svg></button>
  <button type="button" aria-label="Retour" class="size-10"><svg viewBox="0 0 40 40" fill="currentColor"><path d="M8 18.500L30 5Q32.500 4 32.500 6.500V33.500Q32.500 36 30 35L8 21.500Q6 20 8 18.500Z"/></svg></button>
</div>
</body>
</html>
